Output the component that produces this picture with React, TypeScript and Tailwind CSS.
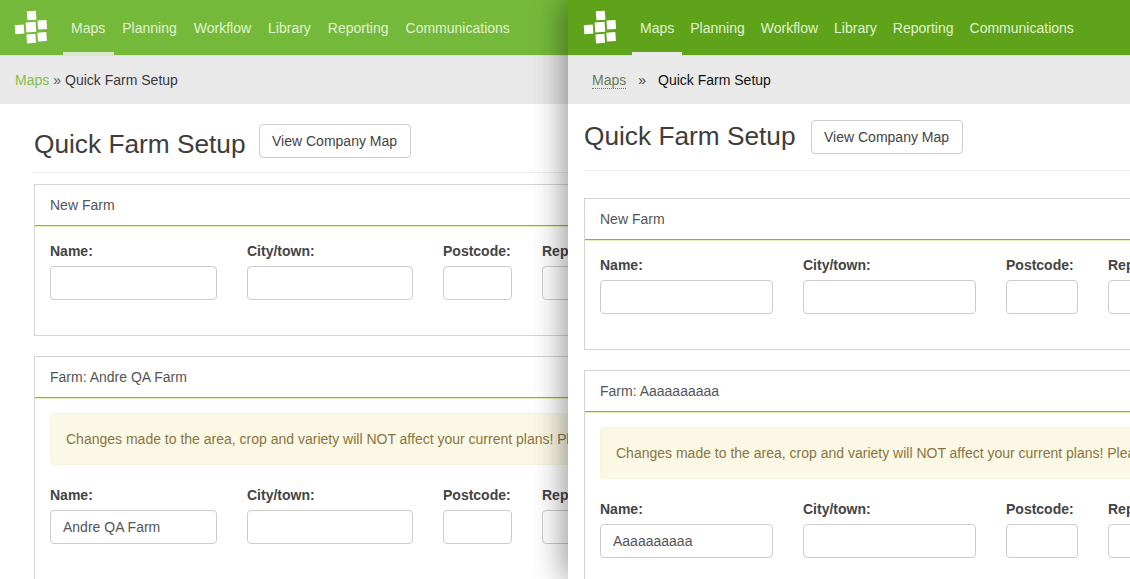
import React from 'react';

const Logo = () => (
  <svg width="36" height="36" viewBox="0 0 36 36" className="block">
    <g fill="#fff" transform="rotate(-4 18 18)">
      <rect x="14" y="1" width="9" height="9" />
      <rect x="1" y="14" width="9" height="9" />
      <rect x="12" y="12" width="10" height="10" />
      <rect x="24" y="11" width="9" height="9" />
      <rect x="12" y="24" width="9" height="9" />
      <rect x="23" y="23" width="9" height="9" />
    </g>
  </svg>
);

const navItems = ['Maps', 'Planning', 'Workflow', 'Library', 'Reporting', 'Communications'];

const Nav = ({
  barClass,
  logoClass,
  activeClass,
  itemClass,
}: {
  barClass: string;
  logoClass: string;
  activeClass: string;
  itemClass: string;
}) => (
  <div className={`flex h-[56px] shrink-0 items-stretch border-b border-[#d5ecbd] ${barClass}`}>
    <div className={`flex items-center pt-px ${logoClass}`}>
      <Logo />
    </div>
    {navItems.map((item, i) => (
      <div
        key={item}
        className={`-mb-px flex items-center border-b-[4px] pt-[4px] text-[14px] text-[#e0f2d0] ${itemClass} ${i === 0 ? activeClass : 'border-transparent'}`}
      >
        {item}
      </div>
    ))}
  </div>
);

const Field = ({ label, value }: { label: string; value?: string }) => (
  <div className="min-w-0">
    <div className="h-[20px] text-[14px] leading-[20px] font-bold whitespace-nowrap text-[#444]">{label}</div>
    <div className="mt-[5px] h-[34px] rounded-[4px] border border-[#ccc] bg-white px-3 text-[14px] leading-[32px] text-[#555]">
      {value}
    </div>
  </div>
);

const Panel = ({
  title,
  cols,
  value,
  alert,
}: {
  title: string;
  cols: string;
  value?: string;
  alert?: boolean;
}) => (
  <div className={`w-[900px] shrink-0 border border-[#d4d4d4] ${alert ? 'h-[240px]' : 'h-[152px]'}`}>
    <div className="flex h-[41px] items-center border-b border-[#8fb52a] px-[15px] text-[14px] text-[#555] shadow-[0_1px_0_#e6f2b8]">{title}</div>
    <div className="px-[15px] pt-[15px]">
      {alert && (
        <div className="mb-[20px] flex h-[52px] items-center rounded-[4px] border border-[#f8f4e0] bg-[#fbf8e6] px-[15px] text-[14px] whitespace-nowrap text-[#8a7440]">
          Changes made to the area, crop and variety will NOT affect your current plans! Please review your plans after saving.
        </div>
      )}
      <div className={`grid ${cols}`}>
        <Field label="Name:" value={value} />
        <Field label="City/town:" />
        <Field label="Postcode:" />
        <Field label="Reporting:" />
      </div>
    </div>
  </div>
);

export default function App() {
  return (
    <div className="flex h-[579px] w-[1130px] overflow-hidden bg-white font-['Liberation_Sans',Arial,sans-serif]">
      <div className="w-[568px] shrink-0 overflow-hidden">
        <Nav barClass="bg-[#75b93a]" logoClass="w-[62.5px] pl-[14px]" activeClass="border-[#d9e8cb]" itemClass="px-[8.5px]" />
        <div className="flex h-[48px] items-center bg-[#e9e9e9] pl-[15px] text-[14px] text-[#3a3a3a]">
          <span className="text-[#82bf4c]">Maps</span>
          <span className="mx-1 text-[#555]">»</span>
          <span>Quick Farm Setup</span>
        </div>
        <div className="w-[900px] pl-[34px]">
          <div className="flex h-[69px] items-start gap-[13px] border-b border-[#eee] pt-[20px]">
            <h1 className="pt-[2px] text-[26.25px] leading-[36px] whitespace-nowrap text-[#3d3d3d]">Quick Farm Setup</h1>
            <div className="flex h-[34px] w-[152px] items-center justify-center rounded-[4px] border border-[#ccc] text-[14px] text-[#444]">
              View Company Map
            </div>
          </div>
          <div className="mt-[11px] flex flex-col gap-[20px]">
            <Panel title="New Farm" cols="grid-cols-[167px_166px_69px_100px] gap-x-[30px]" />
            <Panel title="Farm: Andre QA Farm" cols="grid-cols-[167px_166px_69px_100px] gap-x-[30px]" value="Andre QA Farm" alert />
          </div>
        </div>
      </div>
      <div className="relative z-10 min-w-0 flex-1 overflow-hidden bg-white shadow-[-6px_0_28px_rgba(0,0,0,0.38)]">
        <Nav barClass="bg-[#5fa31a]" logoClass="w-[64px] pl-[15px]" activeClass="border-[#e9e9e9]" itemClass="px-2" />
        <div className="flex h-[48px] items-center bg-[#e9e9e9] pl-[24px] text-[14px] text-[#111]">
          <span className="mt-[2px] border-b border-dotted border-[#5f8a3a] leading-[15px] text-[#6a7a5c]">Maps</span>
          <span className="ml-[12px] text-[#444]">»</span>
          <span className="ml-[12px]">Quick Farm Setup</span>
        </div>
        <div className="w-[900px] pl-[16px]">
          <div className="flex h-[67px] items-start gap-[15px] border-b border-[#eee] pt-[16px]">
            <h1 className="text-[26.25px] leading-[32px] whitespace-nowrap text-[#3d3d3d]">Quick Farm Setup</h1>
            <div className="flex h-[34px] w-[152px] items-center justify-center rounded-[4px] border border-[#ccc] text-[14px] text-[#444]">
              View Company Map
            </div>
          </div>
          <div className="mt-[27px] flex flex-col gap-[20px]">
            <Panel title="New Farm" cols="grid-cols-[173px_173px_72px_100px] gap-x-[30px]" />
            <Panel title="Farm: Aaaaaaaaaa" cols="grid-cols-[173px_173px_72px_100px] gap-x-[30px]" value="Aaaaaaaaaa" alert />
          </div>
        </div>
      </div>
    </div>
  );
}
